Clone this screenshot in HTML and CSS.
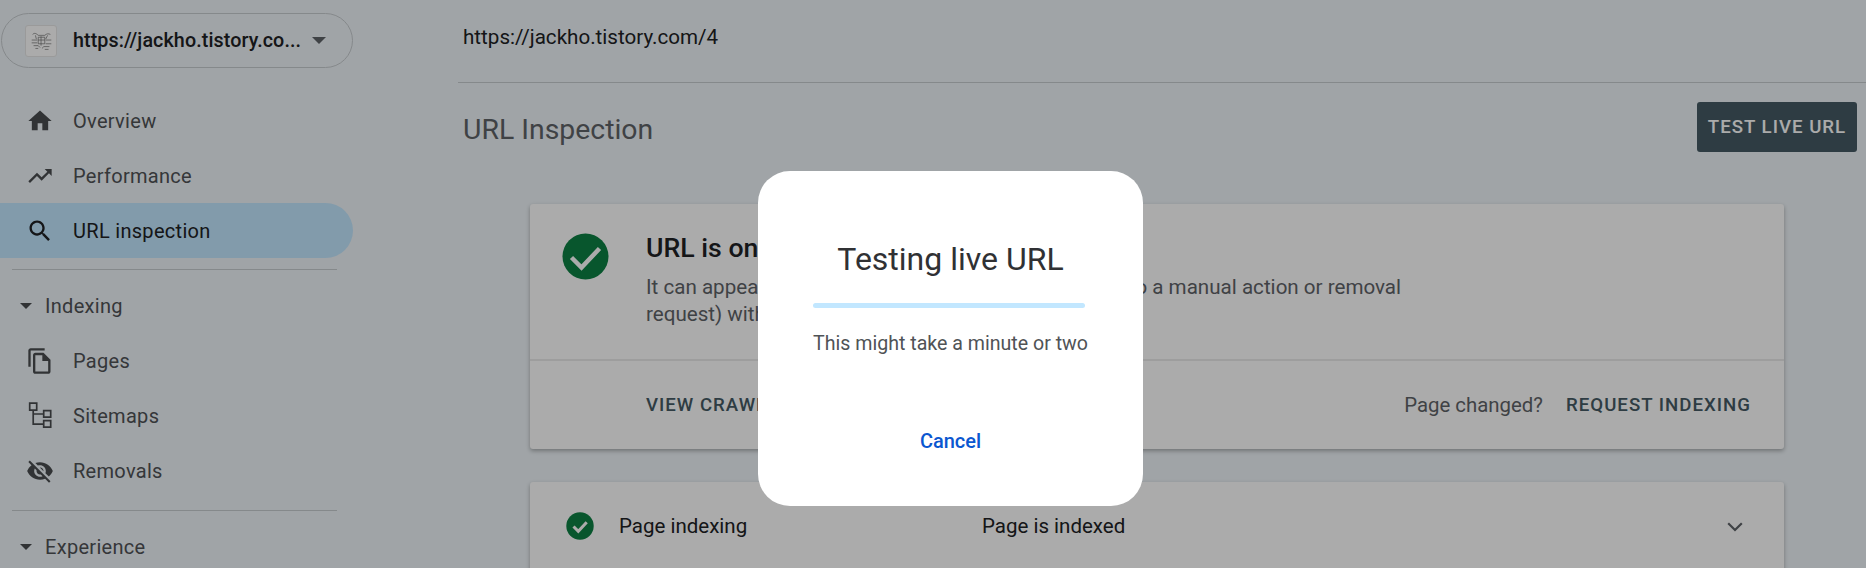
FILE: index.html
```html
<!DOCTYPE html>
<html lang="en">
<head>
<meta charset="utf-8">
<title>URL Inspection</title>
<link rel="stylesheet" href="styles.css">
</head>
<body>
<div class="app">
  <aside class="sidebar">
    <div class="property">
      <span class="favicon">
        <svg viewBox="0 0 31 31" width="29" height="29"><path class="scribble" d="M6 9c2-2 4-1 6 1h7c2-2 4-2 6-1M9 10l1 4M22 10l-2 4M12 12h7v7h-7zM15 11v10M12 15h7M5 15h6M20 15h6M5 18h6M20 19h6M7 21h5l2 2M24 22h-6l-2 2M9 24h3M19 25h4"/></svg>
      </span>
      <span class="property-name">https://jackho.tistory.co...</span>
      <svg class="caret" viewBox="0 0 14 7" width="14" height="7"><path d="M0 0h14L7 7z"/></svg>
    </div>
    <nav class="nav">
      <a class="nav-item"><svg class="icon" viewBox="0 0 24 24"><path d="M10 20v-6h4v6h5v-8h3L12 3 2 12h3v8z"/></svg>Overview</a>
      <a class="nav-item"><svg class="icon" viewBox="0 0 24 24"><path d="M16 6l2.29 2.29-4.88 4.88-4-4L2 16.59 3.41 18l6-6 4 4 6.3-6.29L22 12V6z"/></svg>Performance</a>
      <a class="nav-item active"><svg class="icon" viewBox="0 0 24 24"><path d="M15.5 14h-.79l-.28-.27C15.41 12.59 16 11.11 16 9.5 16 5.91 13.09 3 9.5 3S3 5.91 3 9.5 5.91 16 9.5 16c1.61 0 3.09-.59 4.23-1.57l.27.28v.79l5 4.99L20.49 19l-4.99-5zm-6 0C7.01 14 5 11.99 5 9.5S7.01 5 9.5 5 14 7.01 14 9.5 11.99 14 9.5 14z"/></svg>URL inspection</a>
    </nav>
    <hr class="side-rule first">
    <div class="nav-group"><svg class="group-caret" viewBox="0 0 12 6" width="12" height="6"><path d="M0 0h12L6 6z"/></svg>Indexing</div>
    <nav class="nav">
      <a class="nav-item"><svg class="icon" viewBox="0 0 24 24"><path d="M16 1H4c-1.1 0-2 .9-2 2v14h2V3h12V1zm-1 4H8c-1.1 0-1.99.9-1.99 2L6 21c0 1.1.89 2 1.99 2H19c1.1 0 2-.9 2-2V11l-6-6zM8 21V7h6v5h5v9H8z"/></svg>Pages</a>
      <a class="nav-item"><svg class="icon" viewBox="0 0 28 28"><path class="tree" d="M3.7 1.2h7v7h-7zM17.7 8.7h7v6.4h-7zM17.7 18.7h7v6.4h-7zM7.2 8.2v14h10.5M7.2 12h10.5"/></svg>Sitemaps</a>
      <a class="nav-item"><svg class="icon" viewBox="0 0 24 24"><path d="M12 7c2.76 0 5 2.24 5 5 0 .65-.13 1.26-.36 1.83l2.92 2.92c1.51-1.26 2.7-2.89 3.43-4.75-1.73-4.39-6-7.5-11-7.5-1.4 0-2.74.25-3.98.7l2.16 2.16C10.74 7.13 11.35 7 12 7zM2 4.27l2.28 2.28.46.46C3.08 8.3 1.78 10.02 1 12c1.73 4.39 6 7.5 11 7.5 1.55 0 3.03-.3 4.38-.84l.42.42L19.73 22 21 20.73 3.27 3 2 4.27zM7.53 9.8l1.55 1.55c-.05.21-.08.43-.08.65 0 1.66 1.34 3 3 3 .22 0 .44-.03.65-.08l1.55 1.55c-.67.33-1.41.53-2.2.53-2.76 0-5-2.24-5-5 0-.79.2-1.53.53-2.2zm4.31-.78l3.15 3.15.02-.16c0-1.66-1.34-3-3-3l-.17.01z"/></svg>Removals</a>
    </nav>
    <hr class="side-rule second">
    <div class="nav-group"><svg class="group-caret" viewBox="0 0 12 6" width="12" height="6"><path d="M0 0h12L6 6z"/></svg>Experience</div>
  </aside>

  <main class="main">
    <div class="url-bar">https://jackho.tistory.com/4</div>
    <div class="title-row">
      <h1 class="page-title">URL Inspection</h1>
      <button class="test-button">TEST LIVE URL</button>
    </div>

    <section class="card summary">
      <div class="summary-body">
        <svg class="check-large" viewBox="0 0 47 47"><circle cx="23.5" cy="23.5" r="23"/><path d="M9.5 24.5l10 10 18-19"/></svg>
        <div class="summary-text">
          <h2 class="summary-title">URL is on Google</h2>
          <p class="summary-desc">It can appear in Google Search results (if not subject to a manual action or removal request) with all relevant enhancements</p>
        </div>
      </div>
      <div class="summary-actions">
        <span class="link-button">VIEW CRAWLED PAGE</span>
        <span class="changed">Page changed?</span>
        <span class="link-button">REQUEST INDEXING</span>
      </div>
    </section>

    <section class="card status">
      <svg class="check-small" viewBox="0 0 28 28"><circle cx="14" cy="14" r="13.7"/><path d="M7.5 14.5l4.8 4.8 8.4-9"/></svg>
      <span class="status-name">Page indexing</span>
      <span class="status-value">Page is indexed</span>
      <svg class="chevron" viewBox="0 0 16 10" width="16" height="10"><path d="M1.2 1.2L8 8l6.8-6.8"/></svg>
    </section>
  </main>
</div>

<div class="overlay">
  <div class="modal">
    <h2 class="modal-title">Testing live URL</h2>
    <div class="progress"></div>
    <p class="modal-text">This might take a minute or two</p>
    <button class="cancel">Cancel</button>
  </div>
</div>
</body>
</html>
```
FILE: styles.css
```css
* { box-sizing: border-box; }
html, body { margin: 0; height: 568px; overflow: hidden; }
body { background: #eff5f9; font-family: Roboto, "Liberation Sans", sans-serif; color: #202124; }
.app { display: flex; height: 568px; overflow: hidden; }

.sidebar { flex: 0 0 458px; padding-top: 13px; }
.property { display: flex; align-items: center; width: 352px; height: 55px; margin-left: 1px; padding-left: 23px; border: 1px solid #c7ccd0; border-radius: 28px; }
.favicon { display: flex; flex: 0 0 32px; height: 32px; align-items: center; justify-content: center; background: #fff; border: 1px solid #e6e6e6; border-radius: 3px; }
.scribble { fill: none; stroke: #666; stroke-width: .7; }
.property-name { margin-left: 16px; font-size: 19.7px; font-weight: 500; letter-spacing: .1px; white-space: nowrap; }
.caret { margin-left: 11px; fill: #5f6368; }

.nav { display: flex; flex-direction: column; }
.property + .nav { margin-top: 25px; }
.nav-item { display: flex; align-items: center; width: 353px; height: 55px; padding-left: 26px; border-radius: 0 28px 28px 0; font-size: 20px; font-weight: 400; color: #4f5256; letter-spacing: .3px; }
.nav-item.active { background: #c2e7ff; color: #202124; }
.icon { flex: 0 0 28px; width: 28px; height: 28px; margin-right: 19px; fill: #4a4d50; }
.nav-item.active .icon { fill: #202124; }
.tree { fill: none; stroke: #4a4d50; stroke-width: 1.7; }
.side-rule { width: 325px; height: 1px; margin: 0 0 0 12px; border: 0; background: #c7ccd0; }
.side-rule.first { margin-top: 11px; margin-bottom: 8px; }
.side-rule.second { margin-top: 12px; margin-bottom: 8px; }
.nav-group { display: flex; align-items: center; height: 55px; padding-left: 20px; font-size: 20px; font-weight: 400; color: #4f5256; letter-spacing: .3px; }
.group-caret { margin-right: 13px; fill: #4a4d50; }

.main { flex: 1; min-width: 0; }
.url-bar { display: flex; align-items: center; height: 83px; padding: 0 0 8px 5px; border-bottom: 1px solid #c7ccd0; font-size: 20.6px; }
.title-row { display: flex; justify-content: space-between; align-items: flex-start; height: 121px; padding: 19px 9px 0 5px; }
.page-title { margin: 10px 0 0; font-size: 28.4px; line-height: 36px; font-weight: 400; color: #5f6368; }
.test-button { width: 160px; height: 50px; padding: 0; border: 0; border-radius: 3px; background: #455a64; color: #fff; font: 500 18.67px Roboto, sans-serif; letter-spacing: 1px; }

.card { width: 1254px; margin-left: 72px; background: #fff; border-radius: 3px; box-shadow: 0 2px 4px rgba(0,0,0,.3); }
.summary { height: 245px; }
.summary-body { display: flex; height: 157px; padding: 29px 0 0 32px; border-bottom: 2px solid #ebebeb; }
.check-large { flex: 0 0 47px; width: 47px; height: 47px; }
.check-large circle { fill: #0d8043; }
.check-large path { fill: none; stroke: #fff; stroke-width: 4.5; }
.summary-text { margin-left: 37px; }
.summary-title { margin: 0; font-size: 26.67px; line-height: 30px; font-weight: 500; }
.summary-desc { width: 775px; margin: 11px 0 0; font-size: 20.6px; line-height: 27px; color: #5f6368; }
.summary-actions { display: flex; align-items: center; height: 88px; padding: 0 33px 0 116px; }
.link-button { font-size: 18.67px; font-weight: 500; letter-spacing: 1px; color: #455a64; }
.changed { margin-left: auto; margin-right: 23px; font-size: 20.4px; color: #5f6368; }

.status { display: flex; height: 200px; margin-top: 33px; padding: 0 41px 0 36px; align-items: flex-start; }
.check-small { flex: 0 0 28px; width: 28px; height: 28px; margin-top: 30px; }
.check-small circle { fill: #0d8043; }
.check-small path { fill: none; stroke: #fff; stroke-width: 3; }
.status-name { flex: 0 0 363px; margin: 32px 0 0 25px; font-size: 20.5px; line-height: 24px; }
.status-value { flex: 1; margin-top: 32px; font-size: 20.5px; line-height: 24px; }
.chevron { margin-top: 40px; }
.chevron path { fill: none; stroke: #5f6368; stroke-width: 2.2; }

.overlay { position: fixed; inset: 0; background: rgba(0,0,0,.33); }
.modal { position: absolute; left: 758px; top: 171px; display: flex; flex-direction: column; align-items: center; width: 385px; height: 335px; padding-top: 68px; border-radius: 32px; background: #fff; }
.modal-title { margin: 0; font-size: 32px; line-height: 40px; font-weight: 400; color: #303134; }
.progress { width: 272px; height: 5px; margin: 24px 3px 0 0; border-radius: 3px; background: #c2e7ff; }
.modal-text { margin: 24px 0 0; font-size: 19.6px; line-height: 24px; color: #505356; white-space: nowrap; }
.cancel { margin-top: 73px; padding: 0; border: 0; background: none; color: #0b57d0; font: 500 20px Roboto, sans-serif; }
```
